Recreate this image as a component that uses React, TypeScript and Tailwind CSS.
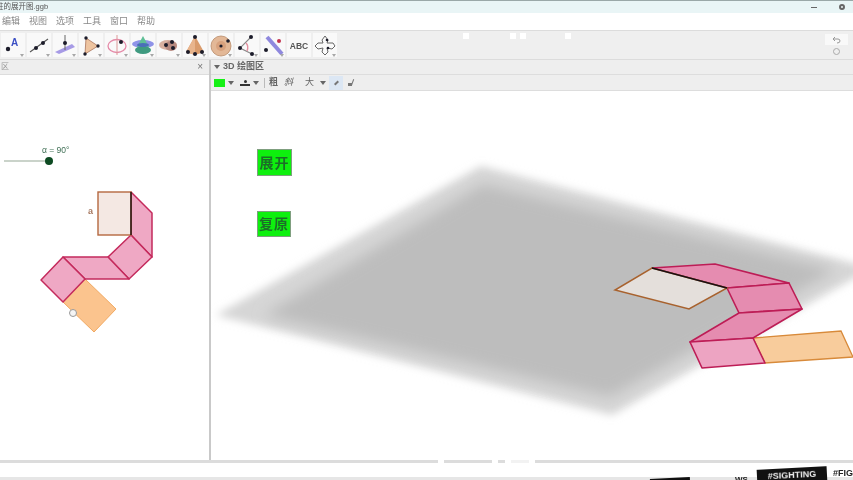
import React from 'react';

const MENUS = ['编辑', '视图', '选项', '工具', '窗口', '帮助'];

const Dot = ({ x, y, r = 2 }: { x: number; y: number; r?: number }) => <circle cx={x} cy={y} r={r} fill="#1c1c2a" />;

// toolbar icons, drawn on a 24x24 box
const TOOL_ICONS: React.ReactNode[] = [
  <>
    <Dot x={7} y={16} r={2.2} />
    <text x={10} y={13} fontSize={10} fontWeight={700} fill="#3b4fc4" fontFamily="Liberation Sans, sans-serif">A</text>
  </>,
  <>
    <line x1={3} y1={19} x2={21} y2={6} stroke="#555" strokeWidth={1.1} />
    <Dot x={9} y={15} />
    <Dot x={16} y={10} />
  </>,
  <>
    <polygon points="2,19 19,11 22,14 6,21" fill="#a79be6" />
    <line x1={12} y1={2} x2={12} y2={17} stroke="#666" strokeWidth={1} />
    <Dot x={12} y={10} />
  </>,
  <>
    <polygon points="7,5 19,13 6,21" fill="#eec4a0" stroke="#a9745a" strokeWidth={0.8} />
    <Dot x={7} y={5} r={1.7} />
    <Dot x={19} y={13} r={1.7} />
    <Dot x={6} y={21} r={1.7} />
  </>,
  <>
    <ellipse cx={12} cy={13} rx={9} ry={6.5} fill="none" stroke="#e58aa8" strokeWidth={1.3} />
    <line x1={12} y1={2} x2={12} y2={22} stroke="#d99" strokeWidth={1} />
    <Dot x={16} y={9} />
  </>,
  <>
    <ellipse cx={12} cy={11} rx={11} ry={4} fill="#8f93e8" />
    <ellipse cx={12} cy={17} rx={8} ry={4} fill="#3f9a80" />
    <polygon points="12,3 18,14 6,14" fill="#5fbf96" />
    <ellipse cx={12} cy={12} rx={6} ry={2} fill="#4a6fb8" />
  </>,
  <>
    <ellipse cx={11} cy={12} rx={9} ry={5} fill="#d9b0a0" />
    <ellipse cx={14} cy={13} rx={6} ry={5} fill="#b88a80" />
    <Dot x={9} y={12} />
    <Dot x={15} y={9} />
    <Dot x={16} y={15} />
  </>,
  <>
    <polygon points="12,3 21,19 12,22 3,19" fill="#d99b6c" />
    <polygon points="12,3 12,22 3,19" fill="#e8b48c" />
    <Dot x={12} y={4} />
    <Dot x={5} y={19} />
    <Dot x={12} y={21} />
    <Dot x={19} y={19} />
  </>,
  <>
    <circle cx={12} cy={13} r={10} fill="#e3b897" stroke="#b88a68" strokeWidth={0.8} />
    <circle cx={12} cy={13} r={5} fill="#d8a27e" />
    <Dot x={12} y={13} r={1.6} />
    <Dot x={19} y={8} r={1.8} />
  </>,
  <>
    <path d="M16 4 L5 15 L17 21" fill="none" stroke="#888" strokeWidth={1.1} />
    <path d="M11 10 Q14 13 12 18" fill="none" stroke="#e48f9f" strokeWidth={1.4} />
    <Dot x={16} y={4} />
    <Dot x={5} y={15} />
    <Dot x={17} y={21} />
  </>,
  <>
    <line x1={6} y1={4} x2={21} y2={21} stroke="#8f88de" strokeWidth={4} />
    <Dot x={5} y={17} />
    <circle cx={18} cy={8} r={2} fill="#c2334f" />
  </>,
  <text x={12} y={16} fontSize={8.5} fontWeight={700} textAnchor="middle" fill="#555" fontFamily="Liberation Sans, sans-serif">ABC</text>,
  <>
    <path d="M12 3 L15 7 L14 10 L20 10 L22 13 L19 16 L14 15 L15 19 L12 22 L9 19 L10 15 L5 16 L2 13 L5 10 L10 10 L9 7 Z" fill="#fafafa" stroke="#666" strokeWidth={1} />
    <Dot x={14} y={7} r={1.3} />
    <Dot x={15} y={15} r={1.3} />
  </>,
];

function ToolButton({ icon, arrow }: { icon: React.ReactNode; arrow: boolean }) {
  return (
    <div className="w-6 h-6 bg-[#f9f9f9]">
      <svg width={24} height={24} viewBox="0 0 24 24" className="blur-[0.5px]">
        {icon}
        {arrow && <polygon points="19,21 23,21 21,24" fill="#a8a8a8" />}
      </svg>
    </div>
  );
}

function Caret() {
  return <span className="w-0 h-0 border-x-[3px] border-x-transparent border-t-[4px] border-t-[#666]" />;
}

function NetFlat() {
  return (
    <svg width={209} height={385} viewBox="0 75 209 385" className="block blur-[0.3px]">
      <line x1={4} y1={161} x2={49} y2={161} stroke="#b9c4b9" strokeWidth={1.5} />
      <circle cx={49} cy={161} r={4} fill="#0d4a22" />
      <text x={42} y={153} fontSize={8.5} fill="#3f6f55" fontFamily="Liberation Sans, sans-serif">α = 90°</text>
      <text x={88} y={214} fontSize={9} fontWeight={700} fill="#a87a62" fontFamily="Liberation Sans, sans-serif">a</text>
      <polygon points="85,279 116,309 94,332 63,302" fill="#fbc48e" stroke="#f0a860" strokeWidth={1} />
      <g stroke="#c42a5c" strokeWidth={1.5} strokeLinejoin="round" fill="#efa8c4">
        <polygon points="131,192 152,213 152,257 131,235" />
        <polygon points="131,235 152,257 129,279 108,257" />
        <polygon points="108,257 129,279 85,279 63,257" />
        <polygon points="63,257 85,279 63,302 41,280" />
      </g>
      <rect x={98} y={192} width={33} height={43} fill="#f4e8e3" stroke="#b5683f" strokeWidth={1.4} />
      <line x1={131} y1={192} x2={131} y2={235} stroke="#1a1010" strokeWidth={1.4} />
      <circle cx={73} cy={313} r={3.5} fill="#f5f5f5" stroke="#999" strokeWidth={1} />
    </svg>
  );
}

function Net3D() {
  return (
    <svg width={642} height={369} viewBox="211 91 642 369" className="absolute inset-0 blur-[0.3px]">
      <defs>
        <filter id="soft" x="-10%" y="-10%" width="120%" height="120%">
          <feGaussianBlur stdDeviation="7" />
        </filter>
        <filter id="softer" x="-10%" y="-10%" width="120%" height="120%">
          <feGaussianBlur stdDeviation="4" />
        </filter>
      </defs>
      <polygon points="481,166 216,315 612,415 872,268" fill="#d6d6d6" filter="url(#softer)" />
      <polygon points="483,184 264,315 610,397 836,270" fill="#bdbdbd" filter="url(#soft)" />
      <polygon points="753,338 841,331 853,357 765,363" fill="#f8cc9c" stroke="#d88a3a" strokeWidth={1.3} />
      <g stroke="#bd1d56" strokeWidth={1.6} strokeLinejoin="round" fill="#e58cb0">
        <polygon points="652,268 715,264 789,283 727,288" />
        <polygon points="727,288 789,283 802,309 739,313" />
        <polygon points="739,313 802,309 753,338 690,342" />
        <polygon points="690,342 753,338 765,363 702,368" fill="#eda4c2" />
      </g>
      <polygon points="652,268 727,288 689,309 615,290" fill="#e4dfdb" stroke="#a8622e" strokeWidth={1.5} />
      <line x1={652} y1={268} x2={727} y2={288} stroke="#1a1014" strokeWidth={1.5} />
    </svg>
  );
}

export default function App() {
  const fontStack = "font-['Liberation_Sans','Noto_Sans_CJK_SC',sans-serif]";
  return (
    <div className={`relative w-[853px] h-[480px] overflow-hidden bg-white flex flex-col ${fontStack}`}>
      {/* title bar */}
      <div className="h-[13px] shrink-0 border-t border-[#9aa8a8] bg-[#e9f5f6] flex items-center justify-between pr-[8px] text-[7.5px] text-[#555] blur-[0.3px]">
        <span className="-ml-[4px]">柱的展开图.ggb</span>
        <div className="flex items-center gap-[22px]">
          <span className="w-[6px] h-px bg-[#666]" />
          <span className="w-[6px] h-[6px] rounded-full border-2 border-[#666]" />
        </div>
      </div>

      {/* menu bar */}
      <div className="h-[17px] shrink-0 flex items-center gap-[9px] pl-[2px] text-[9px] text-[#888] blur-[0.3px]">
        {MENUS.map((m) => (
          <span key={m} className="w-[18px]">{m}</span>
        ))}
      </div>

      {/* toolbar */}
      <div className="relative h-[30px] shrink-0 bg-[#efefef] border-y border-[#dcdcdc] flex items-center gap-[2px] pl-px">
        {TOOL_ICONS.map((icon, i) => (
          <ToolButton key={i} icon={icon} arrow={i !== 11} />
        ))}
        <span className="absolute left-[463px] top-[2px] w-[6px] h-[6px] bg-white" />
        <span className="absolute left-[510px] top-[2px] w-[6px] h-[6px] bg-white" />
        <span className="absolute left-[520px] top-[2px] w-[6px] h-[6px] bg-white" />
        <span className="absolute left-[565px] top-[2px] w-[6px] h-[6px] bg-white" />
        <div className="absolute right-[5px] top-[3px] w-[23px] flex flex-col items-center gap-[2px]">
          <div className="w-full h-[11px] bg-[#f9f9f9] flex items-center justify-center">
            <svg width={9} height={8} viewBox="0 0 9 8" fill="none" stroke="#999" strokeWidth={1}>
              <path d="M3 1 L1 3 L3 5 M1 3 H6 Q8 3 8 5 Q8 7 5 7" />
            </svg>
          </div>
          <span className="w-[7px] h-[7px] mt-px rounded-full border border-[#aaa]" />
        </div>
      </div>

      {/* panels */}
      <div className="flex-1 min-h-0 flex">
        <div className="w-[209px] shrink-0 flex flex-col border-r-2 border-[#c9c9c9] box-content">
          <div className="h-[15px] shrink-0 bg-[#eeeeee] border-b border-[#dddddd] flex items-center justify-between pl-[1px] pr-[6px] text-[8px] text-[#999] blur-[0.3px]">
            <span>区</span>
            <span className="text-[10px] leading-none text-[#777]">×</span>
          </div>
          <div className="flex-1 min-h-0">
            <NetFlat />
          </div>
        </div>

        <div className="flex-1 min-w-0 flex flex-col">
          <div className="h-[15px] shrink-0 bg-[#eeeeee] border-b border-[#dddddd] flex items-center gap-[3px] pl-[3px] text-[9px] font-bold text-[#666] blur-[0.3px]">
            <Caret />
            <span>3D 绘图区</span>
          </div>
          <div className="h-[16px] shrink-0 bg-[#eeeeee] border-b border-[#dddddd] flex items-center pl-[3px] text-[9px] text-[#666] blur-[0.3px]">
            <span className="w-[11px] h-[8px] bg-[#16f016]" />
            <span className="ml-[3px] flex"><Caret /></span>
            <span className="ml-[6px] w-[10px] h-[7px] flex flex-col items-center justify-end gap-px">
              <span className="w-[3px] h-[3px] rounded-full bg-[#333]" />
              <span className="w-[10px] h-[2px] bg-[#333]" />
            </span>
            <span className="ml-[3px] flex"><Caret /></span>
            <span className="ml-[5px] w-px h-[10px] bg-[#bbb]" />
            <span className="ml-[4px] font-bold">粗</span>
            <span className="ml-[6px] italic">斜</span>
            <span className="ml-[12px]">大</span>
            <span className="ml-[6px] flex"><Caret /></span>
            <span className="ml-[3px] w-[14px] h-[14px] bg-[#dce7f4] flex items-center justify-center">
              <span className="w-[5px] h-[2px] -rotate-45 bg-[#777]" />
            </span>
            <span className="ml-[5px] w-[7px] h-[7px] flex items-end">
              <span className="w-[4px] h-[3px] bg-[#777]" />
              <span className="w-px h-[7px] rotate-[20deg] bg-[#777]" />
            </span>
          </div>
          <div className="relative flex-1 min-h-0">
            <Net3D />
            <button className="absolute left-[46px] top-[58px] w-[35px] h-[27px] bg-[#0ef00e] border border-[#7f9f7f] text-[14px] font-bold leading-none tracking-[1px] text-[#1c6e28] blur-[0.5px]">
              展开
            </button>
            <button className="absolute left-[46px] top-[120px] w-[34px] h-[26px] bg-[#0ef00e] border border-[#7f9f7f] text-[14px] font-bold leading-none tracking-[1px] text-[#1c6e28] blur-[0.5px]">
              复原
            </button>
          </div>
        </div>
      </div>

      {/* bottom edge */}
      <div className="h-[3px] shrink-0 flex gap-[6px] blur-[0.3px]">
        <span className="w-[438px] bg-[#dcdcdc]" />
        <span className="w-[48px] bg-[#dcdcdc]" />
        <span className="w-[7px] bg-[#dcdcdc]" />
        <span className="w-[18px] bg-[#f2f2f2]" />
        <span className="flex-1 bg-[#dcdcdc]" />
      </div>
      <div className="h-[14px] shrink-0 bg-white" />
      <div className="h-[3px] shrink-0 bg-[#e6e6e6]" />

      {/* video overlay tags */}
      <span className="absolute left-[650px] top-[478px] w-[40px] h-[6px] bg-[#111] -rotate-3" />
      <span className="absolute left-[735px] top-[474px] text-[8px] font-bold text-[#222] blur-[0.3px]">WS</span>
      <span className="absolute left-[757px] top-[468px] w-[70px] h-[16px] bg-[#111] -rotate-3 text-[9px] font-bold text-center leading-[15px] text-[#eee] blur-[0.3px]">
        #SIGHTING
      </span>
      <span className="absolute left-[833px] top-[467px] text-[9px] font-bold whitespace-nowrap text-[#222] blur-[0.3px]">#FIG</span>
    </div>
  );
}
